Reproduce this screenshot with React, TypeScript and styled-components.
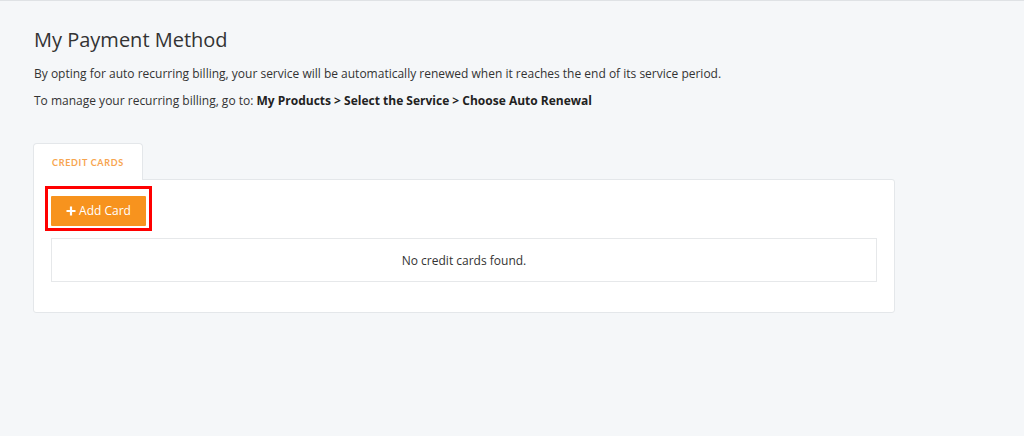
import React, { ReactElement } from 'react';
import styled, { createGlobalStyle } from 'styled-components';

const GlobalStyle = createGlobalStyle`
  html, body {
    margin: 0;
    padding: 0;
    background: #f5f7f9;
    font-family: "Open Sans", "Liberation Sans", sans-serif;
    color: #333;
  }
  * { box-sizing: border-box; }
`;

// 최상위 컨테이너
const Page = styled.div`
  min-height: 436px;
  border-top: 1px solid #dfe2e5;
  padding: 25px 0 0 33px;
`;

const Content = styled.div`
  width: 862px;
`;

const Title = styled.h1`
  margin: 0 0 0 1px;
  font-size: 20px;
  font-weight: 400;
  line-height: 28px;
  color: #333;
`;

const Text = styled.p`
  margin: 0 0 0 1px;
  font-size: 12px;
  line-height: 27px;
  color: #333;
  &:first-of-type {
    margin-top: 6px;
  }
`;

const Bold = styled.strong`
  font-weight: 700;
  color: #222;
`;

const Tabs = styled.div`
  display: flex;
  margin-top: 29px;
`;

const Tab = styled.div`
  width: 110px;
  height: 37px;
  display: flex;
  align-items: center;
  justify-content: center;
  background: #fff;
  border: 1px solid #e4e7ea;
  border-bottom: none;
  border-radius: 4px 4px 0 0;
  margin-bottom: -1px;
  position: relative;
  z-index: 1;
  font-family: "Lato", "Open Sans", sans-serif;
  font-size: 9px;
  font-weight: 700;
  letter-spacing: 0.7px;
  text-transform: uppercase;
  color: #f7a54f;
`;

const Panel = styled.div`
  background: #fff;
  border: 1px solid #e4e7ea;
  border-radius: 0 3px 3px 3px;
  padding: 16px 17px 30px 17px;
`;

const Highlight = styled.div`
  display: inline-block;
  position: relative;
`;

const Marker = styled.span`
  position: absolute;
  left: -6px;
  top: -10px;
  right: -6px;
  bottom: -5px;
  border: 3px solid #ff0000;
  pointer-events: none;
`;

const AddButton = styled.button`
  display: flex;
  align-items: center;
  justify-content: center;
  gap: 3px;
  width: 95px;
  height: 30px;
  border: none;
  border-radius: 1px;
  background: #f7931e;
  color: #fff;
  font-family: "Open Sans", "Liberation Sans", sans-serif;
  font-size: 12px;
  cursor: pointer;
  padding: 0 0 1px 0;
`;

const Empty = styled.div`
  margin-top: 12px;
  height: 44px;
  border: 1px solid #e6e8ea;
  display: flex;
  align-items: center;
  justify-content: center;
  font-size: 12px;
  color: #333;
`;

function PlusIcon(): ReactElement {
  return (
    <svg width="10" height="10" viewBox="0 0 10 10">
      <path d="M5 0.5v9M0.5 5h9" stroke="#fff" strokeWidth="2.2" />
    </svg>
  );
}

function App(): ReactElement {
  return (
    <>
      <GlobalStyle />
      <Page>
        <Content>
          <Title>My Payment Method</Title>
          <Text>
            By opting for auto recurring billing, your service will be automatically renewed when it reaches the end of its service period.
          </Text>
          <Text>
            To manage your recurring billing, go to: <Bold>My Products &gt; Select the Service &gt; Choose Auto Renewal</Bold>
          </Text>

          <Tabs>
            <Tab>Credit Cards</Tab>
          </Tabs>
          <Panel>
            <Highlight>
              <AddButton>
                <PlusIcon />
                Add Card
              </AddButton>
              <Marker />
            </Highlight>
            <Empty>No credit cards found.</Empty>
          </Panel>
        </Content>
      </Page>
    </>
  );
}

export default App;
